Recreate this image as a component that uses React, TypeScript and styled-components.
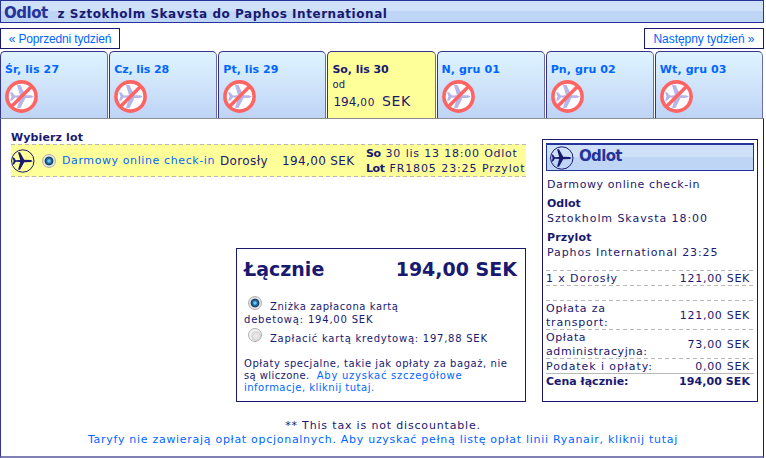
import { useState } from "react";
import styled, { createGlobalStyle } from "styled-components";

const GlobalStyle = createGlobalStyle`
  * {
    box-sizing: border-box;
  }

  body {
    margin: 0;
    background: #fff;
    color: #191970;
    font-family: "DejaVu Sans", sans-serif;
    font-size: 11px;
  }
`;

const Page = styled.main(() => ({
  width: "764px",
  height: "458px",
  display: "flex",
  flexDirection: "column",
  overflow: "hidden",
  whiteSpace: "nowrap",
}));

const Text = styled.span<{ $spacing?: number; $bold?: boolean }>(({ $spacing = 0, $bold }) => ({
  letterSpacing: `${$spacing}px`,
  fontWeight: $bold ? "bold" : "normal",
}));

const LinkText = styled(Text)(() => ({
  color: "#0066ff",
  cursor: "pointer",
}));

const RouteBar = styled.header(() => ({
  height: "23px",
  display: "flex",
  alignItems: "baseline",
  gap: "10px",
  padding: "2px 0 0 3px",
  border: "1px solid #26339a",
  background: "linear-gradient(#cfe0f9 50%, #bfd5f6 50%)",
  fontSize: "12px",
  fontWeight: "bold",
  lineHeight: "20px",
}));

const BarTitle = styled.h1<{ $spacing: number }>(({ $spacing }) => ({
  margin: 0,
  color: "#26339a",
  fontSize: "15px",
  letterSpacing: `${$spacing}px`,
}));

const WeekNav = styled.nav(() => ({
  display: "flex",
  justifyContent: "space-between",
  marginTop: "5px",
}));

const WeekButton = styled.button<{ $spacing: number }>(({ $spacing }) => ({
  width: "120px",
  height: "21px",
  padding: "1px 0 0",
  border: "1px solid #191970",
  background: "#fff",
  color: "#0066ff",
  font: "12px/18px 'Liberation Sans', sans-serif",
  letterSpacing: `${$spacing}px`,
  cursor: "pointer",
}));

const Tabs = styled.div(() => ({
  width: "763px",
  height: "67px",
  flexShrink: 0,
  display: "flex",
  gap: "1px",
  marginTop: "2px",
}));

const Tab = styled.div<{ $active: boolean }>(({ $active }) => ({
  flex: "1 1 0",
  padding: "11px 0 0 4px",
  border: "1px solid #34348c",
  borderRightColor: "#6c6cab",
  borderBottom: "none",
  borderRadius: "5px 5px 0 0",
  background: $active ? "#ffff99" : "linear-gradient(#dff4ff, #bfd4f5)",
  color: $active ? "#191970" : "#0066ff",
  lineHeight: "14px",

  "& svg": {
    display: "block",
    marginTop: "3px",
  },
}));

const From = styled.div(() => ({
  paddingTop: "1px",
  fontSize: "10px",
  letterSpacing: "0.3px",
}));

const TabPrice = styled.div(() => ({
  paddingLeft: "1px",
  fontSize: "12px",
  lineHeight: "18px",
}));

const Cents = styled.span(() => ({
  fontSize: "10.5px",
  letterSpacing: "0.8px",
}));

const Currency = styled.span(() => ({
  fontSize: "14px",
  letterSpacing: "0.6px",
  marginLeft: "3px",
}));

const Panel = styled.section(() => ({
  flex: 1,
  display: "flex",
  flexDirection: "column",
  borderTop: "1px solid #8e8e8e",
  borderLeft: "1px solid #34349a",
  borderRight: "1px solid #191970",
  borderBottom: "2px solid #8080b4",
}));

const Columns = styled.div(() => ({
  display: "flex",
  alignItems: "flex-start",
  justifyContent: "space-between",
  height: "283px",
  padding: "0 5px 0 10px",
}));

const Flights = styled.div(() => ({
  width: "515px",
  height: "283px",
  display: "flex",
  flexDirection: "column",
  paddingTop: "12px",
}));

const SectionTitle = styled.h2(() => ({
  margin: "0 0 -1px",
  fontSize: "11px",
  lineHeight: "14px",
  letterSpacing: "0.13px",
}));

const dashes = "repeating-linear-gradient(90deg, #b9b9b9 0 4px, transparent 4px 7px)";

const FlightRow = styled.div(() => ({
  height: "33px",
  display: "flex",
  alignItems: "center",
  backgroundColor: "#ffff99",
  backgroundImage: `${dashes}, ${dashes}`,
  backgroundSize: "100% 1px",
  backgroundPosition: "top, bottom",
  backgroundRepeat: "no-repeat",
}));

const FareLink = styled(LinkText)(() => ({
  width: "158px",
  marginLeft: "6px",
}));

const Passenger = styled.span(() => ({
  width: "62px",
  fontSize: "12px",
  letterSpacing: "0.36px",
}));

const FarePrice = styled(Passenger)(() => ({
  width: "84px",
}));

const Schedule = styled.div(() => ({
  lineHeight: "15px",
  wordSpacing: "0.4px",

  "& span + span": {
    marginLeft: "1px",
  },
}));

const RadioDot = styled.button<{ $checked: boolean }>(({ $checked }) => ({
  width: "14px",
  height: "14px",
  flexShrink: 0,
  padding: 0,
  border: "1px solid #b0b0b0",
  borderRadius: "50%",
  background: $checked
    ? "radial-gradient(circle at 50% 50%, #6cc4ec 0 1px, #1d6fa3 2.4px, #173a5c 3.9px, #e4e4e4 4.8px)"
    : "radial-gradient(circle at 60% 60%, #f0f0f0, #d6d6d6 4.5px, #f2f2f2 5.5px)",
}));

const FlightRadio = styled(RadioDot)(() => ({
  marginLeft: "7px",
}));

const TotalBox = styled.div(() => ({
  width: "290px",
  height: "154px",
  margin: "auto 0 0 auto",
  padding: "8px 8px 0 7px",
  border: "1px solid #191970",
  fontSize: "10px",
  lineHeight: "12px",
}));

const TotalHead = styled.div(() => ({
  display: "flex",
  justifyContent: "space-between",
  fontSize: "19px",
  fontWeight: "bold",
  lineHeight: "24px",
}));

const PayOption = styled.label<{ $top: number }>(({ $top }) => ({
  display: "grid",
  gridTemplateColumns: "14px 1fr",
  columnGap: "8px",
  marginTop: `${$top}px`,
  paddingLeft: "4px",
}));

const PayLabel = styled(Text)(() => ({
  paddingTop: "5px",
}));

const PayAmount = styled(Text)(() => ({
  display: "block",
  marginTop: "1px",
}));

const Fees = styled.p(() => ({
  margin: "13px 0 0",
}));

const Summary = styled.aside(() => ({
  width: "216px",
  height: "263px",
  marginTop: "20px",
  padding: "3px",
  border: "1px solid #191970",
}));

const SummaryHead = styled.div(() => ({
  height: "28px",
  display: "flex",
  alignItems: "center",
  gap: "5px",
  marginBottom: "6px",
  padding: "0 3px",
  border: "1px solid #26339a",
  borderTopWidth: "2px",
  background: "linear-gradient(#cfe0f9 50%, #bfd5f6 50%)",

  "& h1": {
    marginTop: "-4px",
  },
}));

const Leg = styled.p(() => ({
  margin: "4px 0 0 1px",
  lineHeight: "15px",
}));

const PriceLine = styled.div<{ $solid?: boolean }>(({ $solid }) => ({
  minHeight: "15px",
  display: "flex",
  alignItems: "center",
  justifyContent: "space-between",
  padding: "1px 4px 0 0",
  background: $solid ? "linear-gradient(#b9b9b9, #b9b9b9)" : dashes,
  backgroundSize: "100% 1px",
  backgroundRepeat: "no-repeat",
  lineHeight: "14px",

  "& > span": {
    margin: "1px 0 -1px",
  },
}));

const PriceList = styled.div(() => ({
  marginTop: "10px",
}));

const Footer = styled.footer(() => ({
  padding: "17px 0 0 2px",
  textAlign: "center",
  lineHeight: "14px",
}));

const NoFlightIcon = () => (
  <svg width="33" height="33" viewBox="0 0 33 33">
    <circle cx="16.5" cy="16.5" r="14.6" fill="#fff" />
    <path
      d="M29 16.4 26 15.2H20.5L15.5 5H12L15 15.2 10 15.6 7 12.2H5L6.5 16.5 5 20.8H7L10 17.6 15 18 12 28H15.5L20.5 18H26Z"
      fill="#b6b6ea"
    />
    <circle cx="16.5" cy="16.5" r="14.6" fill="none" stroke="#ff6464" strokeWidth="3.6" />
    <path d="M6.5 26.5 26.5 6.5" stroke="#ff6464" strokeWidth="3.6" />
  </svg>
);

const PlaneIcon = () => (
  <svg width="24" height="24" viewBox="0 0 24 24">
    <circle cx="11.8" cy="12" r="11.2" fill="none" stroke="#191970" />
    <path
      d="M21.5 12 20 11.1 13.2 10.8 9 3.2H7L9.2 10.9 4.8 11.2 3 8.5H1.7L2.6 12 1.7 15.5H3L4.8 12.8 9.2 13.1 7 20.8H9L13.2 13.2 20 12.9Z"
      fill="#191970"
    />
  </svg>
);

const days = [
  { label: "Śr, lis 27", spacing: 0.12 },
  { label: "Cz, lis 28", spacing: -0.08 },
  { label: "Pt, lis 29", spacing: 0.05 },
  { label: "So, lis 30", spacing: -0.04, price: "194" },
  { label: "N, gru 01", spacing: 0.1 },
  { label: "Pn, gru 02", spacing: 0.09 },
  { label: "Wt, gru 03", spacing: 0.1 },
];

const App = () => {
  const [card, setCard] = useState("debit");

  return (
    <Page>
      <GlobalStyle />
      <RouteBar>
        <BarTitle $spacing={-0.5}>Odlot</BarTitle>
        <Text $bold $spacing={0.54}>z Sztokholm Skavsta do Paphos International</Text>
      </RouteBar>
      <WeekNav>
        <WeekButton $spacing={-0.16}>« Poprzedni tydzień</WeekButton>
        <WeekButton $spacing={-0.06}>Następny tydzień »</WeekButton>
      </WeekNav>
      <Tabs>
        {days.map(({ label, spacing, price }) => (
          <Tab key={label} $active={!!price}>
            <Text $bold $spacing={spacing}>{label}</Text>
            {price ? (
              <>
                <From>od</From>
                <TabPrice>
                  {price},<Cents>00</Cents> <Currency>SEK</Currency>
                </TabPrice>
              </>
            ) : (
              <NoFlightIcon />
            )}
          </Tab>
        ))}
      </Tabs>
      <Panel>
        <Columns>
          <Flights>
            <SectionTitle>Wybierz lot</SectionTitle>
            <FlightRow>
              <PlaneIcon />
              <FlightRadio $checked />
              <FareLink $spacing={0.6}>Darmowy online check-in</FareLink>
              <Passenger>Dorosły</Passenger>
              <FarePrice>194,00 SEK</FarePrice>
              <Schedule>
                <div>
                  <Text $bold $spacing={-0.4}>So</Text> <Text $spacing={0.72}>30 lis 13 18:00 Odlot</Text>
                </div>
                <div>
                  <Text $bold $spacing={-0.4}>Lot</Text> <Text $spacing={0.85}>FR1805 23:25 Przylot</Text>
                </div>
              </Schedule>
            </FlightRow>
            <TotalBox>
              <TotalHead>
                <span>Łącznie</span>
                <span>194,00 SEK</span>
              </TotalHead>
              <PayOption $top={15}>
                <RadioDot $checked={card === "debit"} onClick={() => setCard("debit")} />
                <PayLabel $spacing={0.57}>Zniżka zapłacona kartą</PayLabel>
              </PayOption>
              <PayAmount $spacing={0.8}>debetową: 194,00 SEK</PayAmount>
              <PayOption $top={2}>
                <RadioDot $checked={card === "credit"} onClick={() => setCard("credit")} />
                <PayLabel $spacing={0.75}>Zapłacić kartą kredytową: 197,88 SEK</PayLabel>
              </PayOption>
              <Fees>
                <Text $spacing={0.56}>Opłaty specjalne, takie jak opłaty za bagaż, nie</Text>
                <br />
                <Text $spacing={0.4}>są wliczone.&nbsp; </Text>
                <LinkText $spacing={0.74}>Aby uzyskać szczegółowe</LinkText>
                <br />
                <LinkText $spacing={0.49}>informacje, kliknij tutaj.</LinkText>
              </Fees>
            </TotalBox>
          </Flights>
          <Summary>
            <SummaryHead>
              <PlaneIcon />
              <BarTitle $spacing={-0.65}>Odlot</BarTitle>
            </SummaryHead>
            <Leg>
              <Text $spacing={0.6}>Darmowy online check-in</Text>
            </Leg>
            <Leg>
              <Text $bold>Odlot</Text>
              <br />
              <Text $spacing={0.93}>Sztokholm Skavsta 18:00</Text>
            </Leg>
            <Leg>
              <Text $bold $spacing={0.14}>Przylot</Text>
              <br />
              <Text $spacing={0.89}>Paphos International 23:25</Text>
            </Leg>
            <PriceList>
              <PriceLine>
                <Text $spacing={0.89}>1 x Dorosły</Text>
                <Text $spacing={0.7}>121,00 SEK</Text>
              </PriceLine>
              <PriceLine />
              <PriceLine>
                <Text $spacing={0.8}>Opłata za<br />transport:</Text>
                <Text $spacing={0.7}>121,00 SEK</Text>
              </PriceLine>
              <PriceLine>
                <Text $spacing={0.61}>Opłata<br />administracyjna:</Text>
                <Text $spacing={0.7}>73,00 SEK</Text>
              </PriceLine>
              <PriceLine>
                <Text $spacing={0.91}>Podatek i opłaty:</Text>
                <Text $spacing={0.7}>0,00 SEK</Text>
              </PriceLine>
              <PriceLine $solid>
                <Text $bold>Cena łącznie:</Text>
                <Text $bold $spacing={0.08}>194,00 SEK</Text>
              </PriceLine>
            </PriceList>
          </Summary>
        </Columns>
        <Footer>
          <Text $spacing={0.83}>** This tax is not discountable.</Text>
          <br />
          <LinkText $spacing={0.71}>
            Taryfy nie zawierają opłat opcjonalnych. Aby uzyskać pełną listę opłat linii Ryanair, kliknij tutaj
          </LinkText>
        </Footer>
      </Panel>
    </Page>
  );
};

export default App;
